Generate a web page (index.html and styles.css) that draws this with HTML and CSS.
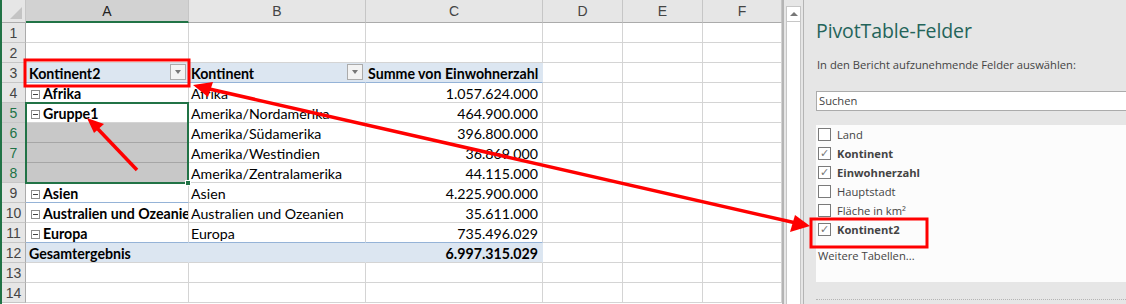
FILE: index.html
```html
<!DOCTYPE html>
<html lang="de">
<head>
  <meta charset="UTF-8" />
  <title>PivotTable Gruppierung</title>
  <link rel="stylesheet" href="styles.css">
</head>
<body>
  <div class="window">
    <div class="sheet">
      <div class="corner"><span class="tri"></span></div>
      <div class="colh colh-sel">A</div>
      <div class="colh">B</div>
      <div class="colh">C</div>
      <div class="colh">D</div>
      <div class="colh">E</div>
      <div class="colh">F</div>

      <div class="rowh">1</div><div class="c"></div><div class="c"></div><div class="c"></div><div class="c"></div><div class="c"></div><div class="c"></div>
      <div class="rowh">2</div><div class="c"></div><div class="c"></div><div class="c"></div><div class="c"></div><div class="c"></div><div class="c"></div>

      <div class="rowh">3</div>
      <div class="c pv b first">Kontinent2<span class="drop"></span></div>
      <div class="c pv b">Kontinent<span class="drop"></span></div>
      <div class="c pv b">Summe von Einwohnerzahl</div>
      <div class="c"></div><div class="c"></div><div class="c"></div>

      <div class="rowh">4</div>
      <div class="c b ind"><span class="minus"></span>Afrika</div>
      <div class="c">Afrika</div>
      <div class="c num">1.057.624.000</div>
      <div class="c"></div><div class="c"></div><div class="c"></div>

      <div class="rowh rowh-sel">5</div>
      <div class="c b ind"><span class="minus"></span>Gruppe1</div>
      <div class="c">Amerika/Nordamerika</div>
      <div class="c num">464.900.000</div>
      <div class="c"></div><div class="c"></div><div class="c"></div>

      <div class="rowh rowh-sel">6</div>
      <div class="c gray"></div>
      <div class="c">Amerika/Südamerika</div>
      <div class="c num">396.800.000</div>
      <div class="c"></div><div class="c"></div><div class="c"></div>

      <div class="rowh rowh-sel">7</div>
      <div class="c gray"></div>
      <div class="c">Amerika/Westindien</div>
      <div class="c num">36.869.000</div>
      <div class="c"></div><div class="c"></div><div class="c"></div>

      <div class="rowh rowh-sel">8</div>
      <div class="c gray"></div>
      <div class="c">Amerika/Zentralamerika</div>
      <div class="c num">44.115.000</div>
      <div class="c"></div><div class="c"></div><div class="c"></div>

      <div class="rowh">9</div>
      <div class="c b ind"><span class="minus"></span>Asien</div>
      <div class="c">Asien</div>
      <div class="c num">4.225.900.000</div>
      <div class="c"></div><div class="c"></div><div class="c"></div>

      <div class="rowh">10</div>
      <div class="c b ind sep"><span class="minus"></span>Australien und Ozeanien</div>
      <div class="c">Australien und Ozeanien</div>
      <div class="c num">35.611.000</div>
      <div class="c"></div><div class="c"></div><div class="c"></div>

      <div class="rowh">11</div>
      <div class="c b ind"><span class="minus"></span>Europa</div>
      <div class="c">Europa</div>
      <div class="c num">735.496.029</div>
      <div class="c"></div><div class="c"></div><div class="c"></div>

      <div class="rowh">12</div>
      <div class="c pv total b first">Gesamtergebnis</div>
      <div class="c pv total"></div>
      <div class="c pv total b num">6.997.315.029</div>
      <div class="c"></div><div class="c"></div><div class="c"></div>

      <div class="rowh">13</div><div class="c"></div><div class="c"></div><div class="c"></div><div class="c"></div><div class="c"></div><div class="c"></div>
      <div class="rowh">14</div><div class="c"></div><div class="c"></div><div class="c"></div><div class="c"></div><div class="c"></div><div class="c"></div>

      <div class="selection"><span class="handle"></span></div>
    </div>

    <div class="vscroll">
      <div class="track"><div class="up"><span class="uptri"></span></div></div>
    </div>

    <div class="panel">
      <h1 class="panel-title">PivotTable-Felder</h1>
      <p class="panel-sub">In den Bericht aufzunehmende Felder auswählen:</p>
      <div class="search">Suchen</div>
      <div class="fields">
        <div class="field"><span class="box"></span>Land</div>
        <div class="field on"><span class="box">&#10003;</span>Kontinent</div>
        <div class="field on"><span class="box">&#10003;</span>Einwohnerzahl</div>
        <div class="field"><span class="box"></span>Hauptstadt</div>
        <div class="field"><span class="box"></span>Fläche in km²</div>
        <div class="field on"><span class="box">&#10003;</span>Kontinent2</div>
        <div class="more">Weitere Tabellen...</div>
      </div>
      <div class="dots"></div>
    </div>
  </div>

  <svg class="marks" width="1126" height="304" viewBox="0 0 1126 304">
    <g fill="none" stroke="#f00" stroke-width="3">
      <rect x="25" y="60" width="164" height="26" />
      <rect x="811" y="219" width="116" height="28" />
      <line x1="205" y1="88" x2="796" y2="223" stroke-width="3.5" />
      <line x1="137" y1="170" x2="96" y2="127" stroke-width="3.5" />
    </g>
    <g fill="#f00">
      <polygon points="193,85 213,82 208,97" />
      <polygon points="810,226 790,232 795,215" />
      <polygon points="87,118 104,124 94,133" />
    </g>
  </svg>
</body>
</html>
```

FILE: styles.css
```css
* {
  box-sizing: border-box;
}
body {
  margin: 0;
  width: 1126px;
  height: 304px;
  overflow: hidden;
  position: relative;
  background: #e6e6e6;
  font-family: Lato, "Liberation Sans", sans-serif;
}
.window {
  display: flex;
  height: 304px;
}

/* spreadsheet grid */
.sheet {
  display: grid;
  grid-template-columns: 24px 163px 177px 177px 80px 80px 79px;
  grid-template-rows: 23px repeat(14, 20px);
  border-left: 2px solid #217346;
  background: #fff;
  font-size: 14.2px;
  color: #000;
  align-content: start;
  position: relative;
}
.corner {
  background: #e6e6e6;
  border-right: 1px solid #c6c6c6;
  border-bottom: 1px solid #ababab;
  position: relative;
}
.tri {
  position: absolute;
  right: 3px;
  bottom: 3px;
  width: 0;
  height: 0;
  border-left: 12px solid transparent;
  border-bottom: 12px solid #c4c4c4;
}
.colh {
  background: #e6e6e6;
  border-right: 1px solid #c6c6c6;
  border-bottom: 1px solid #ababab;
  text-align: center;
  line-height: 22px;
  color: #444;
  font-family: "Liberation Sans", sans-serif;
  font-size: 14px;
}
.colh-sel {
  background: #d2d2d2;
  border-bottom: 2px solid #217346;
  color: #222;
}
.rowh {
  background: #e6e6e6;
  border-right: 1px solid #ababab;
  border-bottom: 1px solid #c6c6c6;
  text-align: center;
  line-height: 20px;
  color: #444;
  font-family: "Liberation Sans", sans-serif;
  font-size: 14px;
}
.rowh-sel {
  background: #d2d2d2;
  color: #217346;
}
.c {
  border-right: 1px solid #d4d4d4;
  border-bottom: 1px solid #d4d4d4;
  line-height: 20px;
  padding: 1px 2px 0 2px;
  white-space: nowrap;
  overflow: hidden;
  position: relative;
}
.b {
  font-weight: bold;
}
.num {
  text-align: right;
  padding-right: 4px;
}
.ind {
  padding-left: 5px;
}
.first {
  padding-left: 3px;
}
.pv {
  background: #dce6f1;
  border-right-color: #dce6f1;
  border-bottom-color: #95b3d7;
}
.total {
  border-top: 1px solid #95b3d7;
  margin-top: -1px;
  border-bottom-color: #d4d4d4;
}
.sep {
  border-top: 1px solid #95b3d7;
  margin-top: -1px;
}
.gray {
  background: #c8c8c8;
  border-bottom-color: #a6a6a6;
}
.drop {
  position: absolute;
  right: 2px;
  top: 1px;
  width: 16px;
  height: 16px;
  background: #f3f3f3;
  border: 1px solid #ababab;
}
.drop::after {
  content: "";
  position: absolute;
  left: 4px;
  top: 5px;
  border-left: 3.5px solid transparent;
  border-right: 3.5px solid transparent;
  border-top: 4px solid #777;
}
.minus {
  display: inline-block;
  width: 9px;
  height: 9px;
  border: 1px solid #8c8c8c;
  background: #fff;
  margin-right: 3px;
  vertical-align: 0;
  position: relative;
}
.minus::after {
  content: "";
  position: absolute;
  left: 1px;
  top: 3px;
  width: 5px;
  height: 1px;
  background: #444;
}
.selection {
  grid-column: 2 / 3;
  grid-row: 6 / 10;
  position: absolute;
  left: -1px;
  top: -1px;
  right: 0;
  bottom: -1px;
  border: 2px solid #217346;
  pointer-events: none;
}
.handle {
  position: absolute;
  right: -4px;
  bottom: -4px;
  width: 6px;
  height: 6px;
  background: #217346;
  border: 1px solid #fff;
}

/* scrollbar */
.vscroll {
  width: 21px;
  border-left: 2px solid #b4b4b4;
  padding: 6px 2px 0 2px;
  background: #e6e6e6;
}
.track {
  height: 100%;
  background: #fff;
  border: 1px solid #c6c6c6;
  border-bottom: none;
}
.up {
  height: 15px;
  border-bottom: 1px solid #c6c6c6;
  position: relative;
}
.uptri {
  position: absolute;
  left: 3px;
  top: 5px;
  border-left: 4px solid transparent;
  border-right: 4px solid transparent;
  border-bottom: 4px solid #777;
}

/* field list pane */
.panel {
  flex: 1;
  border-left: 1px solid #b4b4b4;
  padding-left: 12px;
  font-family: "Open Sans", "Noto Sans", sans-serif;
  color: #444;
  overflow: hidden;
}
.panel-title {
  margin: 18px 0 0 0;
  font-size: 19.5px;
  font-weight: 400;
  color: #24645a;
  line-height: 26px;
  letter-spacing: -0.1px;
}
.panel-sub {
  margin: 13px 0 0 1px;
  font-size: 11.2px;
  line-height: 16px;
  color: #444;
}
.search {
  margin-top: 18px;
  width: 330px;
  height: 20px;
  background: #fff;
  border: 1px solid #ababab;
  font-size: 11.2px;
  line-height: 18px;
  padding-left: 2px;
}
.fields {
  margin-top: 16px;
  width: 330px;
  height: 157px;
  background: #fcfcfc;
  font-size: 11.2px;
}
.field {
  height: 19px;
  line-height: 19px;
  display: flex;
  align-items: center;
  padding-left: 2px;
}
.field:first-child {
  margin-top: -2px;
}
.field.on {
  font-weight: bold;
}
.box {
  width: 13px;
  height: 13px;
  border: 1px solid #7a7a7a;
  background: #fff;
  margin-right: 6px;
  font-size: 11px;
  line-height: 11px;
  text-align: center;
  color: #777;
  font-weight: normal;
  font-family: "DejaVu Sans", sans-serif;
}
.more {
  margin-top: 9px;
  padding-left: 2px;
  line-height: 16px;
}
.dots {
  margin-top: 17px;
  width: 330px;
  border-top: 1px dotted #b4b4b4;
}

/* annotations drawn over the screenshot */
.marks {
  position: absolute;
  left: 0;
  top: 0;
  pointer-events: none;
}
```
